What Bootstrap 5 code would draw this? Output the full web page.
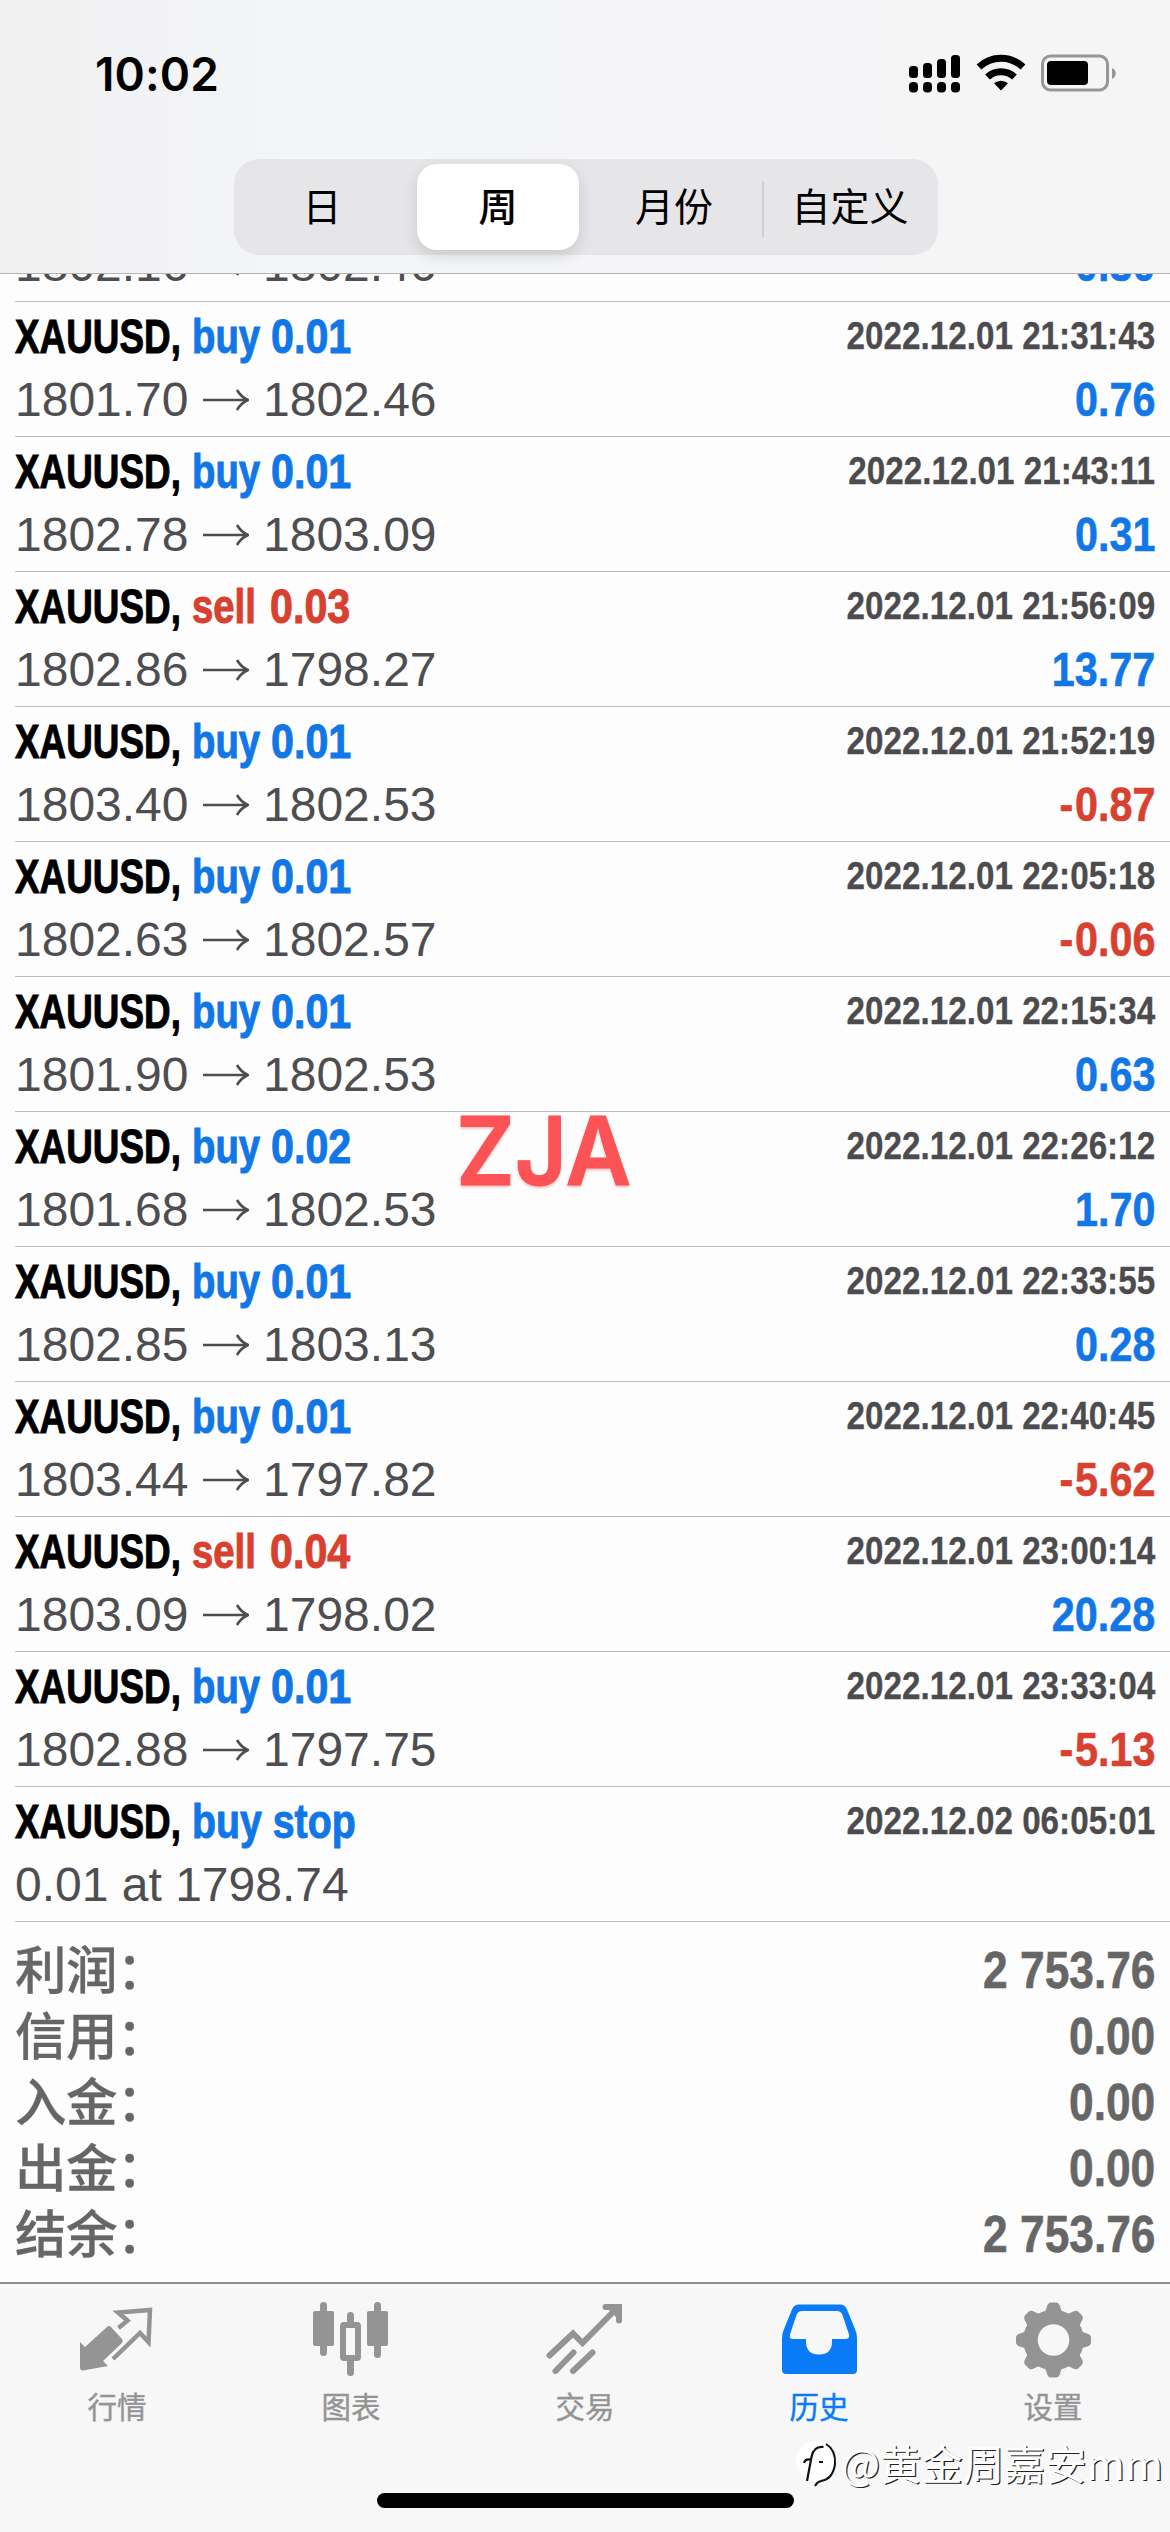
<!DOCTYPE html>
<html lang="zh-CN">
<head>
<meta charset="utf-8">
<meta name="viewport" content="width=device-width, initial-scale=1">
<title>历史</title>
<link rel="stylesheet" href="https://cdn.jsdelivr.net/npm/bootstrap@5.3.0/dist/css/bootstrap.min.css">
<style>
body{width:1170px;height:2532px;overflow:hidden;background:#fdfdfd;font-family:"Liberation Sans","Noto Sans CJK SC",sans-serif;color:#000}
.topbar{height:274px;background:linear-gradient(90deg,#f0f0f1,#f4f5f7 25%,#f5f5f6);border-bottom:1.5px solid #b4b4b5;position:relative;z-index:2}
.statusbar{height:159px;padding:0 51px 11px 95px}
.clock{font:600 46px/1 Inter,sans-serif;letter-spacing:.1px}
.segments{width:704px;height:96px;border-radius:25px;background:#e6e6e8;margin-left:234px;font-size:39px;font-family:"Noto Sans CJK SC",sans-serif}
.segment{width:176px;height:86px;line-height:1;padding-bottom:5px}
.segment.current{width:162px;margin:0 7px;background:#fff;border-radius:20px;box-shadow:0 6px 16px rgba(0,0,0,.13);font-weight:500}
.segment.ruled::before{content:"";width:2px;height:56px;background:#cfcfd2;position:absolute;left:0;top:17px}
.deals{height:2008px;overflow:hidden}
.deals-inner{margin-top:-40px;padding-left:15px}
.deal{padding:0 15px 0 0;border-bottom:1.5px solid #bdbdbf}
.deal-top{height:67px;padding-top:6px}
.deal-bottom{height:67px;color:#4e4e51;font-size:48px;line-height:61px;padding-bottom:6px}
.deal-full{height:135px}
.deal-cut{height:68px}
.sx{display:inline-block;transform-origin:0 50%;white-space:pre;font-weight:700}
.sx-r{transform-origin:100% 50%}
.fit{display:block;white-space:pre;font-weight:700;font-size:48.5px;line-height:56px;-webkit-text-stroke:1px currentColor}
.symbol{width:177px}.symbol>.sx{transform:scaleX(.76)}
.verb>.sx{transform:scaleX(.79)}
.verb.stop>.sx{transform:scaleX(.81)}
.lots>.sx{transform:scaleX(.85)}
.verb-buy{width:79px}.verb-sell{width:78px}
.up{color:#1177e6}.down{color:#d8402f}
.when{color:#4c4c4e;font-size:39px;line-height:56px}
.when>.sx{transform:scaleX(.852);-webkit-text-stroke:.3px currentColor}
.profit{line-height:61px}
.profit>.sx,.sum>.sx{transform:scaleX(.86);-webkit-text-stroke:.6px currentColor}
.minus{letter-spacing:2px}
.arrow{width:46px;height:24px;margin:0 14.5px 0 14px}
.totals{padding:15px 15px 0 0;color:#666;font-size:51.5px}
.total{height:66px;line-height:66px}
.total-name{font-family:"Noto Sans CJK SC",sans-serif;font-weight:500;line-height:60px;height:60px;letter-spacing:-.6px;-webkit-text-stroke:.3px currentColor}
.tabs{height:250px;background:#f7f7f7;border-top:2px solid #8d8d8e;color:#949494;font-size:29.5px;font-family:"Noto Sans CJK SC",sans-serif;position:relative}
.tab{width:234px;padding-top:8px}
.tab svg{width:100px;height:100px}
.tab span{line-height:34px;margin-top:-4px;-webkit-text-stroke:.4px currentColor}
.tab.current{color:#0a7bf7}
.homebar{left:377px;top:209px;width:417px;height:15px;border-radius:8px;background:#000}
.signature{left:792px;top:150px;height:56px;color:#fff;font-size:41.3px;line-height:56px;text-shadow:1.3px 1.3px 0 #222}
.signature svg{width:46px;height:56px;margin-right:3px}
.stamp{left:456px;top:1093px;font:600 95px/115px Inter,sans-serif;color:#fc5356;-webkit-text-stroke:1px #fc5356;text-shadow:0 2px 3px rgba(220,60,60,.35);z-index:3;transform:scaleX(.95);transform-origin:0 50%}
</style>
<script src="https://cdn.jsdelivr.net/npm/bootstrap@5.3.0/dist/js/bootstrap.bundle.min.js"></script>
</head>
<body class="position-relative m-0">
<header class="topbar">
  <div class="statusbar d-flex align-items-center justify-content-between">
    <div class="clock">10:02</div>
    <svg width="212" height="42" viewBox="0 0 212 42">
      <g><rect x="2" y="13" width="9" height="12" rx="3.5"/><rect x="16" y="10" width="9" height="15" rx="3.5"/><rect x="30" y="6" width="9" height="19" rx="3.5"/><rect x="44" y="2" width="9" height="23" rx="3.5"/>
      <rect x="2" y="29" width="9" height="10.500" rx="4"/><rect x="16" y="29" width="9" height="10.500" rx="4"/><rect x="30" y="29" width="9" height="10.500" rx="4"/><rect x="44" y="29" width="9" height="10.500" rx="4"/></g>
      <g fill="none" stroke="#000" stroke-width="7"><path d="M72 14a32 32 0 0 1 44 0"/><path d="M80.500 24a20 20 0 0 1 27 0"/></g><path d="M94 37.500l-7-7.200a10.500 10.500 0 0 1 14 0z"/>
      <rect x="135.500" y="3" width="65" height="34" rx="8" fill="none" stroke="#979799" stroke-width="3"/><rect x="140" y="8" width="41" height="24" rx="4"/><path d="M205 15c5 2 5 9 0 11z" fill="#979799"/>
    </svg>
  </div>
  <div class="segments d-flex align-items-center">
    <div class="segment d-flex align-items-center justify-content-center">日</div>
    <div class="segment current d-flex align-items-center justify-content-center">周</div>
    <div class="segment d-flex align-items-center justify-content-center">月份</div>
    <div class="segment ruled position-relative d-flex align-items-center justify-content-center">自定义</div>
  </div>
</header>
<main class="deals"><div class="deals-inner" id="deals"></div></main>
<div class="stamp position-absolute">ZJA</div>
<footer class="tabs d-flex">
  <div class="tab d-flex flex-column align-items-center"><svg viewBox="0 0 100 100"><g transform="translate(3 -2)"><path d="M10 52l5 5 22-20q2-2 4 0l11 12q1.500 2 0 4L33 71l5 5-25 4.500q-3 0-3-3z" fill="currentColor"/><path d="M48.500 38l9-7.500-9.500-8 32-2.500-1.500 32-8.500-9-27 26" fill="none" stroke="currentColor" stroke-width="4.500"/></g></svg><span>行情</span></div>
  <div class="tab d-flex flex-column align-items-center"><svg viewBox="0 0 100 100"><g transform="translate(0 -1)"><g fill="currentColor"><rect x="12" y="20" width="21" height="35" rx="2"/><rect x="19" y="11" width="7" height="54" rx="3.500"/><rect x="66" y="20" width="21" height="35" rx="2"/><rect x="73" y="11" width="7" height="56" rx="3.500"/><rect x="46" y="21" width="7" height="14" rx="3.500"/><rect x="46" y="67" width="7" height="18" rx="3.500"/></g><rect x="42" y="34" width="15" height="33" fill="none" stroke="currentColor" stroke-width="6" rx="1"/></g></svg><span>图表</span></div>
  <div class="tab d-flex flex-column align-items-center"><svg viewBox="0 0 100 100"><g transform="translate(0 -2)" fill="none" stroke="currentColor" stroke-width="6" stroke-linecap="round"><path d="M14.500 65.500L38 43.500l9.500 9.500L82 18M70.500 17H84v13.500M20.500 81l18-18.500M38 81l19.500-18.500"/><path d="M76 18l8-1-1 8z" stroke-linejoin="round"/></g></svg><span>交易</span></div>
  <div class="tab current d-flex flex-column align-items-center"><svg viewBox="0 0 100 100"><path transform="translate(2 -2)" fill-rule="evenodd" fill="currentColor" d="M28 14.500h41q5 0 7 5l7 17q3 6 3 12v31q0 4.500-4 4.500H15q-4 0-4-4.500v-31q0-6 3-12l7-17q2-5 7-5zM31 21q-4 0-5.500 4L19 44.500q-1 4.500 3 4.500h13v2.500q0 13 13 13t13-13V49h13q5 0 4-4.500L71.500 25q-1.500-4-5.500-4z"/></svg><span>历史</span></div>
  <div class="tab d-flex flex-column align-items-center"><svg viewBox="0 0 100 100" id="gear"></svg><span>设置</span></div>
  <div class="homebar position-absolute"></div>
  <div class="signature position-absolute d-flex align-items-center"><svg viewBox="0 0 46 56"><ellipse cx="24" cy="27" rx="20" ry="20" fill="#fff"/><path d="M15 47l4.500-24q2-11 12-10M12 29q1-4 6-3.500M27 28h4" fill="none" stroke="#111" stroke-width="2.200"/><path d="M34 10q10 6 9 20-2 15-14 17-4 1-6 5" fill="none" stroke="#111" stroke-width="2"/></svg>@黄金周嘉安mm</div>
</footer>
<script>
const deals = [
["buy","0.01","1801.70","1802.46","2022.12.01 21:31:43","0.76"],
["buy","0.01","1802.78","1803.09","2022.12.01 21:43:11","0.31"],
["sell","0.03","1802.86","1798.27","2022.12.01 21:56:09","13.77"],
["buy","0.01","1803.40","1802.53","2022.12.01 21:52:19","-0.87"],
["buy","0.01","1802.63","1802.57","2022.12.01 22:05:18","-0.06"],
["buy","0.01","1801.90","1802.53","2022.12.01 22:15:34","0.63"],
["buy","0.02","1801.68","1802.53","2022.12.01 22:26:12","1.70"],
["buy","0.01","1802.85","1803.13","2022.12.01 22:33:55","0.28"],
["buy","0.01","1803.44","1797.82","2022.12.01 22:40:45","-5.62"],
["sell","0.04","1803.09","1798.02","2022.12.01 23:00:14","20.28"],
["buy","0.01","1802.88","1797.75","2022.12.01 23:33:04","-5.13"]];
const arrow = '<svg class="arrow" viewBox="0 0 46 24"><path d="M0 12h44M34 2q4 7 11 10-7 3-11 10" fill="none" stroke="currentColor" stroke-width="2.6"/></svg>';
const bottom = (left, profit) => `<div class="deal-bottom d-flex justify-content-between"><div class="d-flex align-items-center">${left}</div><div class="profit ${profit[0]==="-"?"down":"up"}"><span class="sx sx-r">${profit.replace("-",'<span class="minus">-</span>')}</span></div></div>`;
const row = (verb, lots, left, when, profit) => {
  const tone = verb === "sell" ? "down" : "up";
  return `<div class="deal deal-full">
<div class="deal-top d-flex justify-content-between"><div class="d-flex"><div class="fit symbol"><span class="sx">XAUUSD,</span></div><div class="fit verb verb-${verb} ${lots?"":"stop"} ${tone}"><span class="sx">${lots?verb:verb+" stop"}</span></div>${lots?`<div class="fit lots ${tone}"><span class="sx">${lots}</span></div>`:""}</div><div class="when"><span class="sx sx-r">${when}</span></div></div>
${bottom(left, profit)}</div>`;
};
const totals = [["利润","2 753.76"],["信用","0.00"],["入金","0.00"],["出金","0.00"],["结余","2 753.76"]];
document.getElementById("deals").innerHTML =
  `<div class="deal deal-cut">${bottom("1802.16"+arrow+"1802.46","0.30")}</div>` +
  deals.map(([v,l,a,b,t,p]) => row(v,l,a+arrow+b,t,p)).join("") +
  row("buy","","0.01 at 1798.74","2022.12.02 06:05:01","") +
  '<div class="totals">' + totals.map(([n,v]) => `<div class="total d-flex justify-content-between"><span class="total-name">${n}：</span><span class="sum"><span class="sx sx-r">${v}</span></span></div>`).join("") + '</div>';
let teeth = "";
for (let i = 0; i < 8; i++) teeth += `<path transform="rotate(${i*45} 50 49)" d="M37 23q5-1 6-6 1-5 4-5.500h6q3 .5 4 5.500 1 5 6 6z"/>`;
document.getElementById("gear").innerHTML = `<g fill="currentColor" transform="translate(.5 -1)">${teeth}<circle cx="50" cy="49" r="23" fill="none" stroke="currentColor" stroke-width="14.5"/></g>`;
</script>
</body>
</html>
